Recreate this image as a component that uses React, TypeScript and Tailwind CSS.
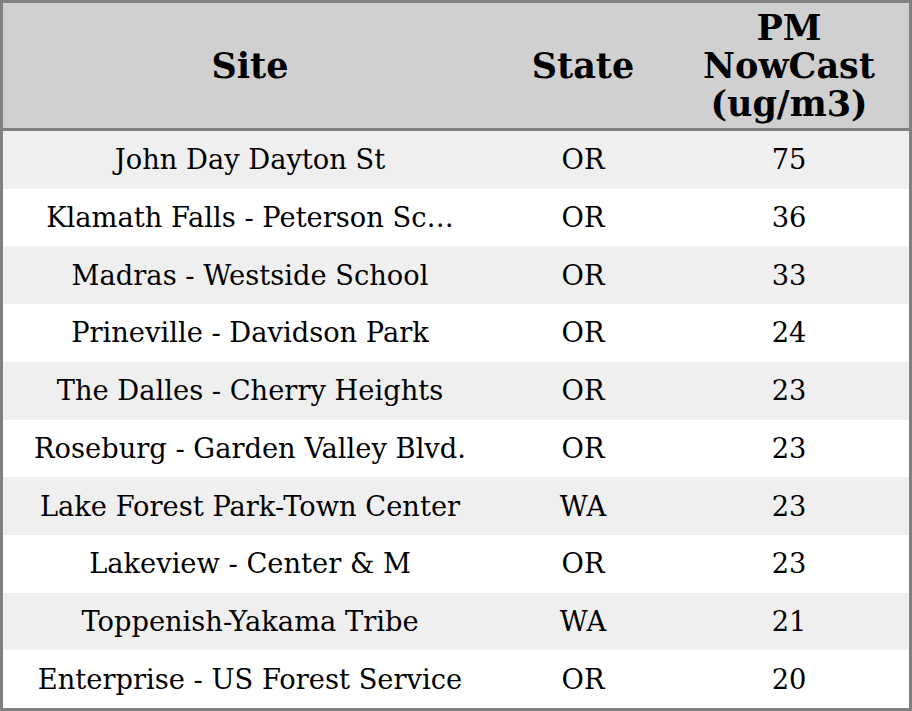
import React from 'react';

const rows: [string, string, string][] = [
  ['John Day Dayton St', 'OR', '75'],
  ['Klamath Falls - Peterson Sc…', 'OR', '36'],
  ['Madras - Westside School', 'OR', '33'],
  ['Prineville - Davidson Park', 'OR', '24'],
  ['The Dalles - Cherry Heights', 'OR', '23'],
  ['Roseburg - Garden Valley Blvd.', 'OR', '23'],
  ['Lake Forest Park-Town Center', 'WA', '23'],
  ['Lakeview - Center & M', 'OR', '23'],
  ['Toppenish-Yakama Tribe', 'WA', '21'],
  ['Enterprise - US Forest Service', 'OR', '20'],
];

export default function App() {
  return (
    <div className="w-[912px] h-[711px] bg-white font-['DejaVu_Serif',serif] text-black">
      <div className="h-full flex flex-col border-[3px] border-[#808080]">
        <div className="grid grid-cols-[494px_172px_240px] h-[128px] shrink-0 bg-[#d0d0d0] border-b-[3px] border-[#808080] font-bold text-[35px] leading-[38px] text-center">
          <div className="flex items-center justify-center">Site</div>
          <div className="flex items-center justify-center">State</div>
          <div className="flex items-center justify-center pt-[1px]">
            PM
            <br />
            NowCast
            <br />
            (ug/m3)
          </div>
        </div>
        <div className="flex-1 flex flex-col">
          {rows.map(([site, state, pm], i) => (
            <div
              key={i}
              className={`flex-1 grid grid-cols-[494px_172px_240px] items-center pt-[2px] text-center text-[27.3px] ${
                i % 2 === 0 ? 'bg-[#efefef]' : 'bg-white'
              }`}
            >
              <div className="whitespace-nowrap">{site}</div>
              <div>{state}</div>
              <div>{pm}</div>
            </div>
          ))}
        </div>
      </div>
    </div>
  );
}
